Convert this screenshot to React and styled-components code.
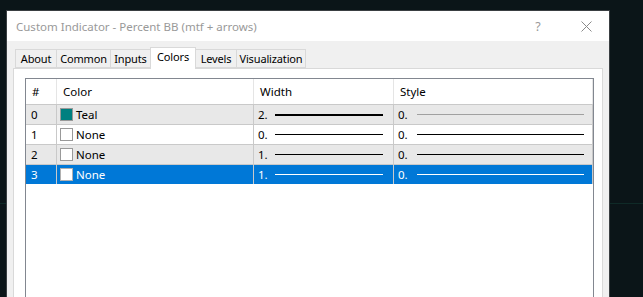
import React from "react";
import styled, { createGlobalStyle } from "styled-components";

const GlobalStyle = createGlobalStyle`
  html, body {
    margin: 0;
    padding: 0;
    height: 100%;
    overflow: hidden;
  }
  body {
    background: #0b1518;
    font-family: "Noto Sans", "Open Sans", sans-serif;
  }
`;

const tabs = [
  { label: "About", w: 42 },
  { label: "Common", w: 55 },
  { label: "Inputs", w: 41 },
  { label: "Colors", w: 46 },
  { label: "Levels", w: 42 },
  { label: "Visualization", w: 70 },
];

const rows = [
  { n: 0, color: "#008080", name: "Teal", width: 2, style: 0, thick: 2, styleTone: "#a0a0a0" },
  { n: 1, color: "#ffffff", name: "None", width: 0, style: 0, thick: 1 },
  { n: 2, color: "#ffffff", name: "None", width: 1, style: 0, thick: 1 },
  { n: 3, color: "#ffffff", name: "None", width: 1, style: 0, thick: 1, selected: true },
];

export default function App() {
  return (
    <>
      <GlobalStyle />
      <Desktop>
        <Window>
          <TitleBar>
            <Title>Custom Indicator - Percent BB (mtf + arrows)</Title>
            <Caption>
              <HelpBtn>?</HelpBtn>
              <CloseBtn>
                <svg width="11" height="11" viewBox="0 0 11 11">
                  <path d="M0.5 0.5 L10.5 10.5 M10.5 0.5 L0.5 10.5" stroke="#8a8a8a" strokeWidth="1" />
                </svg>
              </CloseBtn>
            </Caption>
          </TitleBar>
          <Body>
            <TabStrip>
              {tabs.map((t) => (
                <Tab key={t.label} $w={t.w} $active={t.label === "Colors"}>
                  {t.label}
                </Tab>
              ))}
            </TabStrip>
            <Panel>
              <List>
                <Header>
                  <HeadCell>#</HeadCell>
                  <HeadCell>Color</HeadCell>
                  <HeadCell>Width</HeadCell>
                  <HeadCell>Style</HeadCell>
                </Header>
                {rows.map((r) => (
                  <Row key={r.n} $selected={r.selected} $alt={r.n % 2 === 0}>
                    <Cell $pad={5}>{r.n}</Cell>
                    <Cell $pad={3}>
                      <Swatch style={{ background: r.color }} $selected={r.selected} />
                      <span>{r.name}</span>
                    </Cell>
                    <Cell $pad={4}>
                      <span>{r.width}.</span>
                      <Stroke
                        $thick={r.thick}
                        $tone={r.selected ? "#ffffff" : "#000000"}
                        $right={10}
                        $gap={4}
                      />
                    </Cell>
                    <Cell $pad={4}>
                      <span>{r.style}.</span>
                      <Stroke
                        $thick={1}
                        $tone={r.selected ? "#ffffff" : r.styleTone || "#000000"}
                        $right={8}
                        $gap={6}
                      />
                    </Cell>
                  </Row>
                ))}
              </List>
            </Panel>
          </Body>
        </Window>
      </Desktop>
    </>
  );
}

const Desktop = styled.div`
  width: 643px;
  height: 297px;
  padding: 10px 0 0 6px;
  box-sizing: border-box;
  background: linear-gradient(
    to bottom,
    transparent 203px,
    #0f2a27 203px,
    #0f2a27 204px,
    transparent 204px
  );
`;

const Window = styled.div`
  width: 604px;
  height: 300px;
  box-sizing: border-box;
  border: 1px solid #3a3f42;
  border-bottom: none;
  background: #f0f0f0;
  display: flex;
  flex-direction: column;
`;

const TitleBar = styled.div`
  height: 30px;
  background: #ffffff;
  display: flex;
  align-items: center;
  justify-content: space-between;
  padding-left: 9px;
`;

const Title = styled.div`
  font-size: 11.5px;
  color: #999999;
`;

const Caption = styled.div`
  display: flex;
  align-items: center;
  height: 100%;
`;

const HelpBtn = styled.div`
  width: 46px;
  text-align: center;
  font-size: 12.5px;
  color: #9a9a9a;
`;

const CloseBtn = styled.div`
  width: 46px;
  display: flex;
  justify-content: center;
  padding-left: 2px;
`;

const Body = styled.div`
  flex: 1;
  padding: 6px 6px 0 6px;
  display: flex;
  flex-direction: column;
`;

const TabStrip = styled.div`
  display: flex;
  align-items: flex-end;
  height: 21px;
  padding-left: 2px;
  position: relative;
  z-index: 1;
`;

const Tab = styled.div`
  box-sizing: border-box;
  width: ${(p) => p.$w}px;
  height: ${(p) => (p.$active ? "22px" : "19px")};
  margin-bottom: ${(p) => (p.$active ? "-1px" : "0")};
  padding-bottom: ${(p) => (p.$active ? "4px" : "0")};
  margin-left: -1px;
  border: 1px solid #d9d9d9;
  border-bottom: ${(p) => (p.$active ? "none" : "1px solid #d9d9d9")};
  background: ${(p) => (p.$active ? "#ffffff" : "#f0f0f0")};
  font-size: 11px;
  letter-spacing: -0.15px;
  color: #000000;
  display: flex;
  align-items: center;
  justify-content: center;
  white-space: nowrap;
  &:first-child {
    margin-left: 0;
  }
`;

const Panel = styled.div`
  flex: 1;
  background: #ffffff;
  border: 1px solid #d9d9d9;
  border-bottom: none;
  padding: 9px 9px 0 11px;
`;

const List = styled.div`
  width: 567px;
  height: 100%;
  border: 1px solid #828790;
  border-bottom: none;
  background: #ffffff;
`;

const gridCols = "31px 197px 140px 199px";

const Header = styled.div`
  display: grid;
  grid-template-columns: ${gridCols};
  height: 25px;
`;

const HeadCell = styled.div`
  border-right: 1px solid #e5e5e5;
  padding-left: 6px;
  font-size: 11.5px;
  color: #000000;
  display: flex;
  align-items: center;
`;

const Row = styled.div`
  display: grid;
  grid-template-columns: ${gridCols};
  height: 20px;
  box-sizing: border-box;
  border-top: 1px solid #c9c9c9;
  background: ${(p) => (p.$selected ? "#0078d7" : p.$alt ? "#e8e8e8" : "#ffffff")};
  color: ${(p) => (p.$selected ? "#ffffff" : "#000000")};
`;

const Cell = styled.div`
  box-sizing: border-box;
  border-right: 1px solid #c9c9c9;
  padding-left: ${(p) => p.$pad}px;
  display: flex;
  align-items: center;
  gap: 3px;
  font-size: 11.5px;
  overflow: hidden;
  white-space: nowrap;
`;

const Swatch = styled.div`
  width: 13px;
  height: 13px;
  box-sizing: border-box;
  border: 1px solid ${(p) => (p.$selected ? "#b0b0b0" : "#999999")};
  flex-shrink: 0;
`;

const Stroke = styled.div`
  flex: 1;
  height: ${(p) => p.$thick}px;
  background: ${(p) => p.$tone};
  margin-left: ${(p) => p.$gap}px;
  margin-right: ${(p) => p.$right}px;
`;
